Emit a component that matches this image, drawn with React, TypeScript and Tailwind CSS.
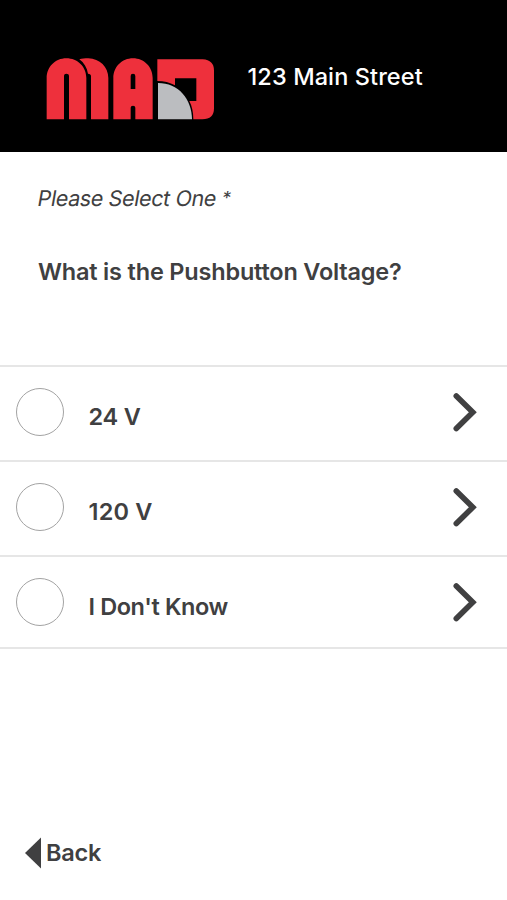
const options = [
  { label: "24 V", tracking: "tracking-[-0.2px]" },
  { label: "120 V", tracking: "tracking-[0.2px]" },
  { label: "I Don't Know", tracking: "tracking-[-0.4px]" },
];

function Logo() {
  return (
    <svg viewBox="0 0 570 270" className="h-[90px] w-[190px] shrink-0" role="img" aria-label="MAD">
      <g fill="#ee303c">
        <path d="M133 43 C141 40 149 40 160 40 C194 41 220 66 220 99 V223 H168 V93 Q168 87 159 86 C156 68 147 53 133 43 Z" />
        <path d="M35 223 V99 C35 66 61 40 94 40 C128 40 154 66 154 99 V223 H102 V92 Q102 86 94 86 Q87 86 87 92 V223 Z" />
        <path
          fillRule="evenodd"
          d="M235 223 V99 C235 66 261 40 294 40 C327 40 353 66 353 99 V223 H301 V188 Q301 182 294 182 Q287 182 287 188 V223 Z M287 132 H301 V93 Q301 86 294 86 Q287 86 287 93 Z"
        />
        <path d="M367 43 H503 Q537 45 537 77 V190 Q537 223 502 223 H475 C475 201 471 184 463 168 H484 V100 H420 V121 C404 112 387 108 367 108 Z" />
      </g>
      <path d="M369 114 C430 114 470 161 471 223 H369 Z" fill="#bbbdc0" />
    </svg>
  );
}

function Chevron() {
  return (
    <svg viewBox="0 0 26 42" className="h-[42px] w-[26px]" aria-hidden="true">
      <path
        d="M5.3 5 21.8 21.3 5.3 37.6"
        fill="none"
        stroke="#404041"
        strokeWidth="5.6"
        strokeLinecap="round"
        strokeLinejoin="miter"
      />
    </svg>
  );
}

export default function App() {
  return (
    <div className="flex h-[900px] w-full flex-col overflow-hidden bg-white font-['Inter',sans-serif] text-[#404041]">
      <header className="flex h-[152px] shrink-0 items-start bg-black pt-[45px] pl-[35px]">
        <Logo />
        <h1 className="mt-[16px] ml-[22.5px] text-[23.5px] leading-8 font-medium tracking-[0.1px] whitespace-nowrap text-white">
          123 Main Street
        </h1>
      </header>

      <main className="flex flex-1 flex-col">
        <div className="h-[213px] px-[38px] pt-[30px]">
          {/* Skewed upright face keeps the double-storey "a" */}
          <p className="h-8 w-fit -skew-x-10 text-[21.5px] leading-8 tracking-[-0.38px] whitespace-nowrap">
            Please Select One <span className="align-[2px] text-[18px] leading-none">*</span>
          </p>
          <h2 className="mt-[42px] text-[23.5px] leading-8 font-[560] tracking-[-0.19px] whitespace-nowrap">
            What is the Pushbutton Voltage?
          </h2>
        </div>

        <ul className="border-b-2 border-[#e6e6e6]">
          {options.map(({ label, tracking }) => (
            <li key={label} className="h-[95px] border-t-2 border-[#e6e6e6] last:h-[92px]">
              <button type="button" className="flex w-full items-start pt-[21px] pr-[30px] pl-4 text-left">
                <span className="size-[48px] shrink-0 rounded-full border border-[#a3a3a3]" />
                <span className={`mt-[13px] ml-[24.5px] flex-1 text-[23.5px] leading-8 font-[560] ${tracking}`}>
                  {label}
                </span>
                <span className="mt-[3px]">
                  <Chevron />
                </span>
              </button>
            </li>
          ))}
        </ul>
      </main>

      <footer className="flex h-[64px] shrink-0 items-start pl-[25px]">
        <button type="button" className="flex items-center pt-px">
          <svg viewBox="0 0 17 32" className="h-8 w-[17px]" aria-hidden="true">
            <path d="M16 0.5v31L0 16Z" fill="#404041" />
          </svg>
          <span className="ml-1 text-[23.5px] leading-8 font-[560] tracking-[-0.2px]">Back</span>
        </button>
      </footer>
    </div>
  );
}
